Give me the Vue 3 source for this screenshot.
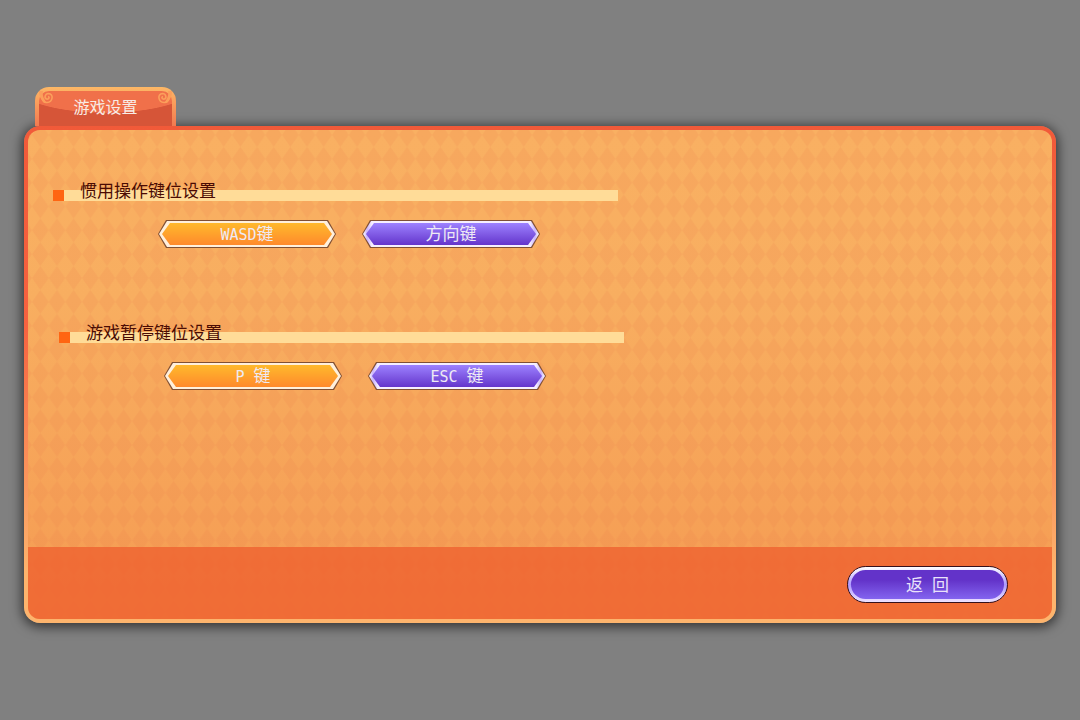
<script setup>
import { ref } from 'vue'

const groups = [
  {
    id: 'move',
    title: '惯用操作键位设置',
    keys: [{ latin: 'WASD', han: '键' }, { latin: '', han: '方向键' }],
  },
  {
    id: 'pause',
    title: '游戏暂停键位设置',
    keys: [{ latin: 'P ', han: '键' }, { latin: 'ESC ', han: '键' }],
  },
]
const chosen = ref({ move: 0, pause: 0 })
</script>

<template>
  <main class="screen">
    <header class="tab">
      <svg class="curl" viewBox="0 0 16 16" aria-hidden="true">
        <path d="M1 1C2 6 4 12 8 11.500C14 11 15 3 9.500 2.500C6 2.500 5 7 7.500 8C10 8.500 11 6 9 5.500" />
        <path class="wedge" d="M0 0H4C3 4 5 8 7 11L5 12C2 9 0 5 0 0Z" />
      </svg>
      <h1>游戏设置</h1>
      <svg class="curl flip" viewBox="0 0 16 16" aria-hidden="true">
        <path d="M1 1C2 6 4 12 8 11.500C14 11 15 3 9.500 2.500C6 2.500 5 7 7.500 8C10 8.500 11 6 9 5.500" />
        <path class="wedge" d="M0 0H4C3 4 5 8 7 11L5 12C2 9 0 5 0 0Z" />
      </svg>
    </header>

    <section class="frame">
      <div class="panel">
        <svg class="pattern" aria-hidden="true">
          <defs>
            <pattern id="harlequin" x="4" y="-7" width="16.67" height="23.85" patternUnits="userSpaceOnUse">
              <path d="M8.33 0L16.67 11.92L8.33 23.85L0 11.92Z" fill="#ec7b4c" fill-opacity=".15" />
            </pattern>
          </defs>
          <rect width="100%" height="100%" fill="url(#harlequin)" />
        </svg>
        <div class="body">
          <section v-for="g in groups" :key="g.id" class="group" :class="g.id">
            <div class="heading">
              <span class="mark"></span>
              <h2>{{ g.title }}</h2>
            </div>
            <div class="keys">
              <button
                v-for="(k, i) in g.keys"
                :key="i"
                type="button"
                class="key"
                :class="{ on: chosen[g.id] === i }"
                :aria-pressed="chosen[g.id] === i"
                @click="chosen[g.id] = i"
              >
                <span class="rim"><span class="face"><span v-if="k.latin" class="latin">{{ k.latin }}</span>{{ k.han }}</span></span>
              </button>
            </div>
          </section>
        </div>
        <footer class="foot">
          <button type="button" class="back"><span class="pill">返<span class="latin">&nbsp;</span>回</span></button>
        </footer>
      </div>
    </section>
  </main>
</template>

<style>
body {
  background: #808080;
}
</style>

<style scoped>
.screen {
  box-sizing: border-box;
  min-height: 100vh;
  padding: 87px 24px 97px;
  display: flex;
  flex-direction: column;
  background: #808080;
  font-family: "Noto Sans CJK SC", sans-serif;
}
h1,
h2 {
  margin: 0;
  font-weight: 400;
}
.tab {
  position: relative;
  z-index: 1;
  box-sizing: border-box;
  width: 141px;
  height: 39px;
  margin-left: 11px;
  border: 4px solid transparent;
  border-bottom: 0;
  border-radius: 14px 14px 0 0;
  background:
    radial-gradient(ellipse 94px 30px at 50% -8px, #f0704a 98%, #d65538 100%) padding-box,
    linear-gradient(#fdb866, #fba45e 30%, #f27a50) border-box;
  display: flex;
  justify-content: space-between;
}
h1 {
  font-size: 16px;
  line-height: 30px;
  color: #f8ece6;
}
.curl {
  width: 16px;
  height: 16px;
  fill: none;
  stroke: #fb9f5b;
  stroke-width: 1.6;
}
.wedge {
  fill: #fb9f5b;
  stroke: none;
}
.flip {
  transform: scaleX(-1);
}
.frame {
  flex: 1;
  display: flex;
  padding: 4px;
  border-radius: 16px;
  background: linear-gradient(#f15a39, #f66240 40%, #fdb46d 90%);
  box-shadow: 0 2px 12px 2px rgba(0, 0, 0, 0.6);
}
.panel {
  position: relative;
  flex: 1;
  display: flex;
  flex-direction: column;
  border-radius: 12px;
  overflow: hidden;
  background: linear-gradient(#f9b062, #f8ae60 35%, #f59b52 100%);
}
.pattern {
  position: absolute;
  width: 100%;
  height: 100%;
}
.body {
  position: relative;
  flex: 1;
  display: flex;
  flex-direction: column;
  gap: 74px;
  padding: 50px 24px 0 25px;
}
.group {
  width: 565px;
}
.pause {
  margin-left: 6px;
}
.heading {
  display: flex;
  align-items: flex-end;
  height: 21px;
  background: linear-gradient(#ffdc98, #ffdc98) bottom / 100% 11px no-repeat;
}
.mark {
  width: 11px;
  height: 11px;
  background: #ff6512;
}
h2 {
  margin-left: 16px;
  font-size: 17px;
  line-height: 22px;
  color: #4a0b03;
}
.keys {
  display: flex;
  gap: 26px;
  margin: 19px 0 0 105px;
}
.key,
.rim,
.face {
  clip-path: polygon(8px 0, calc(100% - 8px) 0, 100% 50%, calc(100% - 8px) 100%, 8px 100%, 0 50%);
}
.key {
  width: 178px;
  height: 28px;
  padding: 1px;
  border: 0;
  background: #805034;
  font: 400 17px "Noto Sans CJK SC", sans-serif;
  color: #eeeaf4;
  cursor: pointer;
}
.rim {
  display: block;
  padding: 2px 3px;
  background: linear-gradient(90deg, #fff, #c9b2ff 4px, #f6efff 9px, #f6efff calc(100% - 9px), #c9b2ff calc(100% - 4px), #fff);
}
.face {
  display: block;
  height: 22px;
  line-height: 20px;
  background: linear-gradient(#9d82ff, #6435cb);
}
.latin {
  font-family: "DejaVu Sans Mono", monospace;
  font-size: 15px;
  line-height: 1;
  white-space: pre;
}
.on .rim {
  background: #fff0dc;
}
.on .face {
  background: linear-gradient(#ffb92c, #ff8a2c);
}
.foot {
  position: relative;
  display: flex;
  justify-content: flex-end;
  height: 53px;
  padding: 19px 44px 0 0;
  background: rgba(239, 98, 48, 0.8);
}
.back {
  box-sizing: border-box;
  width: 161px;
  height: 37px;
  padding: 3px;
  border: 1px solid #35101c;
  border-radius: 19px;
  background: linear-gradient(#fff, #ad98ff 50%, #eee2ff);
  font: 400 17px "Noto Sans CJK SC", sans-serif;
  color: #e9e2fa;
  cursor: pointer;
}
.pill {
  display: block;
  height: 29px;
  line-height: 27px;
  border-radius: 15px;
  background: linear-gradient(#6333c9 35%, #8364ef);
}
</style>
